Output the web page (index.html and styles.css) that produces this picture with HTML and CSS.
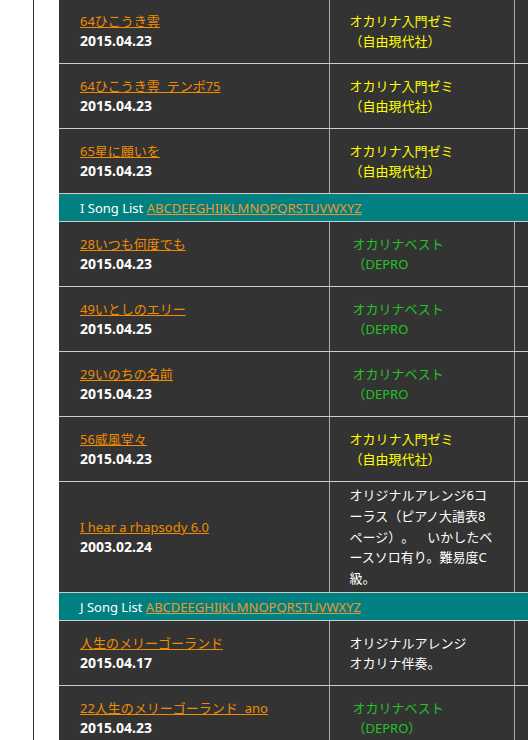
FILE: index.html
```html
<!DOCTYPE html>
<html lang="ja">
<head>
<meta charset="utf-8">
<title>Song List</title>
<link rel="stylesheet" href="styles.css">
</head>
<body>
<div class="page">
  <table class="songs">
    <colgroup><col class="c-title"><col class="c-book"><col class="c-note"></colgroup>
    <tbody>
      <tr>
        <td class="title"><a href="#">64ひこうき雲</a><br><span class="date">2015.04.23</span></td>
        <td class="book"><span class="yellow">オカリナ入門ゼミ<br>（自由現代社）</span></td>
        <td class="note"></td>
      </tr>
      <tr>
        <td class="title"><a href="#">64ひこうき雲&nbsp;&nbsp;テンポ75</a><br><span class="date">2015.04.23</span></td>
        <td class="book"><span class="yellow">オカリナ入門ゼミ<br>（自由現代社）</span></td>
        <td class="note"></td>
      </tr>
      <tr>
        <td class="title"><a href="#">65星に願いを</a><br><span class="date">2015.04.23</span></td>
        <td class="book"><span class="yellow">オカリナ入門ゼミ<br>（自由現代社）</span></td>
        <td class="note"></td>
      </tr>
      <tr class="index">
        <td colspan="3">I Song List <span class="letters"><a href="#">A</a><a href="#">B</a><a href="#">C</a><a href="#">D</a><a href="#">E</a><a href="#">E</a><a href="#">G</a><a href="#">H</a><a href="#">I</a><a href="#">J</a><a href="#">K</a><a href="#">L</a><a href="#">M</a><a href="#">N</a><a href="#">O</a><a href="#">P</a><a href="#">Q</a><a href="#">R</a><a href="#">S</a><a href="#">T</a><a href="#">U</a><a href="#">V</a><a href="#">W</a><a href="#">X</a><a href="#">Y</a><a href="#">Z</a></span></td>
      </tr>
      <tr>
        <td class="title"><a href="#">28いつも何度でも</a><br><span class="date">2015.04.23</span></td>
        <td class="book"><span class="green">オカリナベスト<br>（DEPRO</span></td>
        <td class="note"></td>
      </tr>
      <tr>
        <td class="title"><a href="#">49いとしのエリー</a><br><span class="date">2015.04.25</span></td>
        <td class="book"><span class="green">オカリナベスト<br>（DEPRO</span></td>
        <td class="note"></td>
      </tr>
      <tr>
        <td class="title"><a href="#">29いのちの名前</a><br><span class="date">2015.04.23</span></td>
        <td class="book"><span class="green">オカリナベスト<br>（DEPRO</span></td>
        <td class="note"></td>
      </tr>
      <tr>
        <td class="title"><a href="#">56威風堂々</a><br><span class="date">2015.04.23</span></td>
        <td class="book"><span class="yellow">オカリナ入門ゼミ<br>（自由現代社）</span></td>
        <td class="note"></td>
      </tr>
      <tr>
        <td class="title"><a href="#">I hear a rhapsody 6.0</a><br><span class="date">2003.02.24</span></td>
        <td class="book long">オリジナルアレンジ6コーラス（ピアノ大譜表8ページ）。　いかしたベースソロ有り。難易度C級。</td>
        <td class="note"></td>
      </tr>
      <tr class="index">
        <td colspan="3">J Song List <span class="letters"><a href="#">A</a><a href="#">B</a><a href="#">C</a><a href="#">D</a><a href="#">E</a><a href="#">E</a><a href="#">G</a><a href="#">H</a><a href="#">I</a><a href="#">J</a><a href="#">K</a><a href="#">L</a><a href="#">M</a><a href="#">N</a><a href="#">O</a><a href="#">P</a><a href="#">Q</a><a href="#">R</a><a href="#">S</a><a href="#">T</a><a href="#">U</a><a href="#">V</a><a href="#">W</a><a href="#">X</a><a href="#">Y</a><a href="#">Z</a></span></td>
      </tr>
      <tr>
        <td class="title"><a href="#">人生のメリーゴーランド</a><br><span class="date">2015.04.17</span></td>
        <td class="book">オリジナルアレンジ<br>オカリナ伴奏。</td>
        <td class="note"></td>
      </tr>
      <tr>
        <td class="title"><a href="#">22人生のメリーゴーランド&nbsp;&nbsp;ano</a><br><span class="date">2015.04.23</span></td>
        <td class="book"><span class="green">オカリナベスト<br>（DEPRO）</span></td>
        <td class="note"></td>
      </tr>
    </tbody>
  </table>
</div>
</body>
</html>
```

FILE: styles.css
```css
html, body {
  margin: 0;
  padding: 0;
  background: #ffffff;
  overflow: hidden;
}

body {
  font-family: "Noto Sans", "Noto Sans CJK JP", sans-serif;
  font-size: 13px;
  line-height: 20px;
  color: #ffffff;
  text-spacing-trim: space-all;
}

.page {
  margin-left: 33px;
  border-left: 1px solid #333333;
  padding-left: 25px;
  min-height: 760px;
}

.songs {
  margin-top: -1px;
  border-collapse: collapse;
  table-layout: fixed;
  width: 700px;
  background: #333333;
}

.c-title { width: 270px; }
.c-book { width: 185px; }
.c-note { width: 245px; }

.songs td {
  height: 58px;
  padding: 3px 0;
  vertical-align: middle;
  border-bottom: 1px solid #cccccc;
}

.songs td.title {
  padding-left: 21px;
}

.songs td.book {
  padding-left: 20px;
  padding-right: 19px;
  border-left: 1px solid #aaaaaa;
}

.songs td.note {
  border-left: 1px solid #aaaaaa;
}

.songs td.long {
  line-height: 20.8px;
}

.songs a {
  color: #f08c00;
  text-decoration: underline;
}

.date {
  font-size: 14px;
  font-weight: bold;
  color: #ffffff;
}

.yellow {
  color: #ffff00;
}

.green {
  display: inline-block;
  margin-left: 3px;
  color: #22c322;
}

.songs tr.index td {
  height: auto;
  padding: 4px 21px 3px 21px;
  background: #008080;
  border-top: 1px solid #cccccc;
  border-bottom: 1px solid #cccccc;
  color: #ffffff;
}

.letters a {
  color: #f0962c;
}
```
